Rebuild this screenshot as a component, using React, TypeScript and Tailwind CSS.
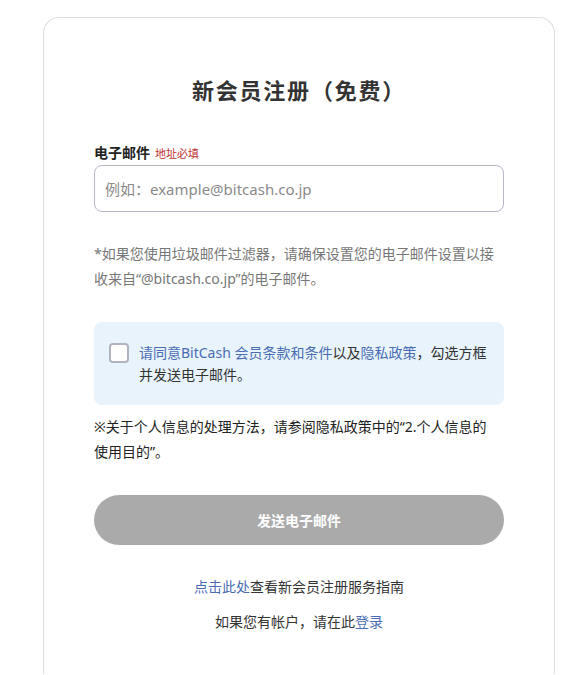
export default function App() {
  return (
    <div
      className="min-h-screen bg-white pt-[17px] pl-[43px] pr-[17px]"
      style={{ fontFamily: '"Noto Sans", "Noto Sans CJK SC", sans-serif' }}
    >
      <div className="w-[512px] rounded-t-2xl border border-[#dcdde2] border-b-0 px-[50px] pt-[58px] pb-10 text-[#333]">
        {/* 标题 */}
        <h1 className="text-center text-[22px] font-bold leading-[28px] tracking-[1.8px] text-[#333]">
          新会员注册（免费）
        </h1>

        {/* 邮箱 */}
        <div className="mt-[38px]">
          <div className="flex items-baseline gap-[5px]">
            <span className="text-[14px] font-bold text-[#222]">电子邮件</span>
            <span className="text-[11px] text-[#c03030]">地址必填</span>
          </div>
          <input
            type="text"
            placeholder="例如：example@bitcash.co.jp"
            className="mt-[2px] h-[47px] w-full rounded-lg border border-[#b4b7c6] px-[10px] text-[15px] text-[#333] placeholder:text-[#8a8a8a] outline-none"
          />
        </div>

        <p className="mt-[29px] text-[14px] leading-[25px] text-[#777]">
          *如果您使用垃圾邮件过滤器，请确保设置您的电子邮件设置以接收来自“@bitcash.co.jp”的电子邮件。
        </p>

        {/* 同意条款 */}
        <div className="mt-[31px] flex gap-[10px] rounded-lg bg-[#e8f3fc] pl-[15px] pr-[14px] pt-[20px] pb-[19px]">
          <div className="mt-[1px] h-[20px] w-[20px] shrink-0 rounded-[4px] border-2 border-[#b0b3bd] bg-white" />
          <p className="text-[14px] leading-[22px] text-[#333]">
            <span className="text-[#4a6cb3]">请同意BitCash 会员条款和条件</span>以及
            <span className="text-[#4a6cb3]">隐私政策</span>，勾选方框并发送电子邮件。
          </p>
        </div>

        <p className="mt-[9px] pr-[12px] text-[14px] leading-[25px] text-[#222]">
          ※关于个人信息的处理方法，请参阅隐私政策中的“2.个人信息的使用目的”。
        </p>

        <button
          type="button"
          className="mt-[31px] h-[50px] w-full rounded-full bg-[#aaaaaa] text-[14px] font-bold text-white"
        >
          发送电子邮件
        </button>

        <div className="mt-[30px] flex flex-col items-center gap-[11px] text-[14px] leading-[24px] text-[#333]">
          <p>
            <span className="text-[#4a6cb3]">点击此处</span>查看新会员注册服务指南
          </p>
          <p>
            如果您有帐户，请在此<span className="text-[#4a6cb3]">登录</span>
          </p>
        </div>
      </div>
    </div>
  );
}
